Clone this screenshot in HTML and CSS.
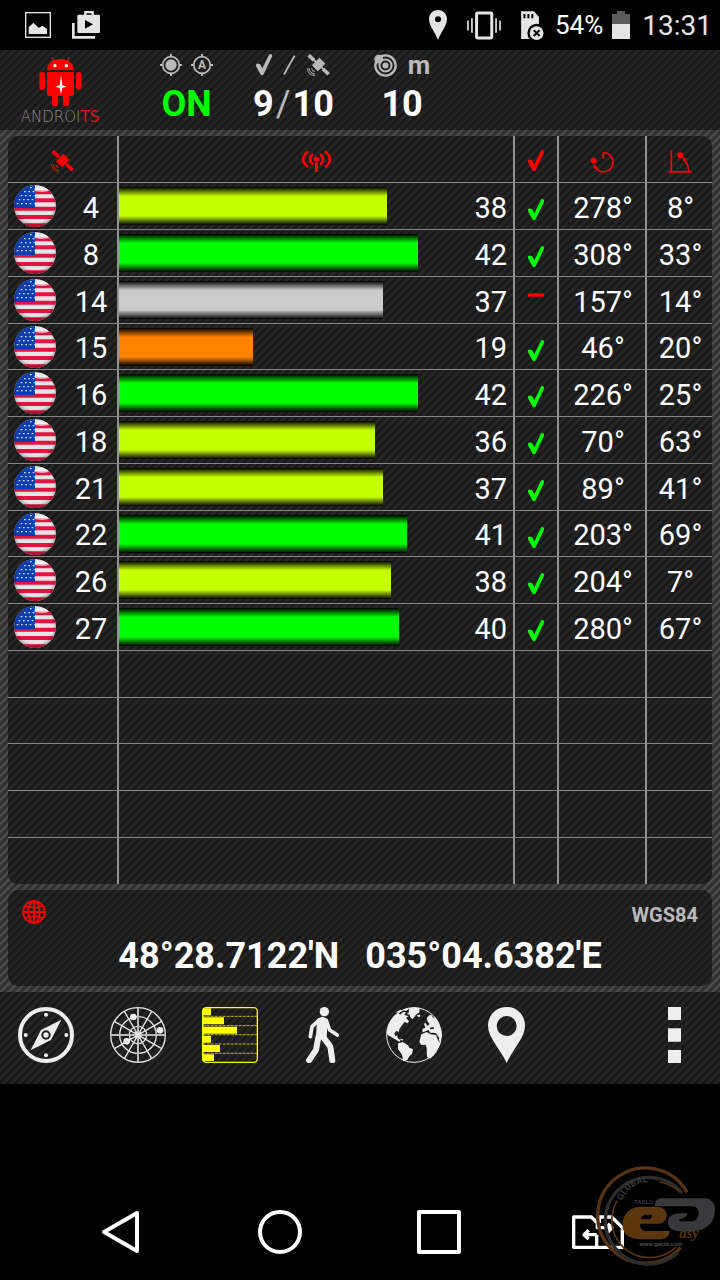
FILE: index.html
```html
<!DOCTYPE html>
<html lang="en">
<head>
  <meta charset="UTF-8">
  <meta name="viewport" content="width=device-width, initial-scale=1.0">
  <title>GPS Satellites</title>
  <link rel="stylesheet" href="styles.css">
</head>
<body>
  <!-- shared icons -->
  <svg class="sprite" aria-hidden="true">
    <defs>
      <clipPath id="flag-clip"><circle cx="63" cy="63" r="63"/></clipPath>
      <radialGradient id="flag-shade" cx="50%" cy="45%" r="55%">
        <stop offset="80%" stop-color="#000" stop-opacity="0"/>
        <stop offset="100%" stop-color="#000" stop-opacity="0.3"/>
      </radialGradient>
    </defs>
    <symbol id="flag" viewBox="0 0 126 126">
      <g clip-path="url(#flag-clip)">
        <rect width="126" height="126" fill="#e6e4e6"/>
        <path d="M0 22h126M0 46h126M0 71h126M0 96h126M0 121h126" stroke="#e0143c" stroke-width="12"/>
        <rect width="63" height="69" fill="#0a3cb4"/>
        <path d="M48 8h12M30 20h32M20 32h42M14 44h48M8 56h54" stroke="#dde6fa" stroke-width="4" stroke-dasharray="5 8"/>
        <ellipse cx="84" cy="14" rx="24" ry="7" fill="#fff" opacity="0.6"/>
        <rect width="126" height="126" fill="url(#flag-shade)"/>
      </g>
    </symbol>
    <symbol id="check" viewBox="0 0 48 66">
      <path d="M5 34L18 58L43 6" fill="none" stroke="currentColor" stroke-width="11" stroke-linecap="round" stroke-linejoin="round"/>
      <path d="M5 30L12 30L20 44L18 62Z" fill="currentColor"/>
    </symbol>
    <symbol id="minus" viewBox="0 0 48 66">
      <path d="M5 6H43" stroke="currentColor" stroke-width="11" stroke-linecap="round"/>
    </symbol>
    <symbol id="satellite" viewBox="0 0 70 66">
      <path d="M5 3L22 19M49 45L66 61" stroke="currentColor" stroke-width="11"/>
      <path d="M19 16L52 48" stroke="currentColor" stroke-width="5"/>
      <path d="M38 11L56 29L33 52L15 34Z" fill="currentColor"/>
      <path d="M14 43q1 9 10 10M7 43q1 16 17 17M2 43q0 21 22 22" fill="none" stroke="currentColor" stroke-width="3"/>
    </symbol>
  </svg>

  <div class="status-bar">
    <svg class="icon-photo" viewBox="75 36 78 78">
      <rect x="77" y="38" width="74" height="74" fill="none" stroke="#e4e4e4" stroke-width="4"/>
      <path d="M86 102V82L100 68L116 83L128 77L141 87V102Z" fill="#e4e4e4"/>
    </svg>
    <svg class="icon-28" viewBox="216 30 84 84">
      <path d="M220 66V109H285" fill="none" stroke="#e4e4e4" stroke-width="8"/>
      <path d="M256 42V33H278V42" fill="none" stroke="#e4e4e4" stroke-width="7" stroke-linejoin="round"/>
      <rect x="232" y="41" width="68" height="55" rx="4" fill="#e4e4e4"/>
      <path d="M255 57V83L279 70Z" fill="#000"/>
    </svg>
    <div class="status-right">
      <svg class="icon-place" viewBox="27 30 54 90">
        <path fill-rule="evenodd" d="M54 30C38 30 27 42 27 57C27 77 45 96 54 120C63 96 81 77 81 57C81 42 70 30 54 30ZM54 49a9 9 0 1 1 0 18a9 9 0 1 1 0-18Z" fill="#e4e4e4"/>
      </svg>
      <svg class="icon-vibrate" viewBox="140 32 103 86">
        <rect x="169" y="37" width="46" height="76" rx="3" fill="none" stroke="#e4e4e4" stroke-width="9"/>
        <path d="M143 60V90M155 53V97M228 53V97M240 60V90" stroke="#e4e4e4" stroke-width="5"/>
      </svg>
      <svg class="icon-sd" viewBox="302 32 69 88">
        <path d="M302 33H341L356 50V117H302Z" fill="#e4e4e4"/>
        <path d="M312 41V54M324 41V54M336 41V54" stroke="#000" stroke-width="6"/>
        <circle cx="349" cy="99" r="28" fill="#000"/>
        <circle cx="349" cy="99" r="21" fill="#e4e4e4"/>
        <path d="M340 90L358 108M358 90L340 108" stroke="#000" stroke-width="6"/>
      </svg>
      <span class="battery-level">54%</span>
      <svg class="icon-battery" viewBox="576 33 54 84">
        <path d="M576 42H591V33H615V42H630V72H576Z" fill="#5c5c5c"/>
        <rect x="576" y="72" width="54" height="45" fill="#e4e4e4"/>
      </svg>
      <span class="clock">13:31</span>
    </div>
  </div>

  <header class="summary stripes-dark">
    <div class="logo">
      <svg class="logo-droid" viewBox="108 165 141 156">
        <g fill="#ff0000">
          <path d="M138 210C138 166 219 166 219 210Z"/>
          <path d="M138 216H219V280Q219 288 211 288H146Q138 288 138 280Z"/>
          <rect x="115" y="216" width="17" height="54" rx="8"/>
          <rect x="225" y="216" width="17" height="54" rx="8"/>
          <rect x="153" y="276" width="18" height="43" rx="8"/>
          <rect x="186" y="276" width="18" height="43" rx="8"/>
        </g>
        <path d="M160 187L153 172M197 187L204 172" stroke="#d22" stroke-width="3"/>
        <circle cx="162" cy="197" r="5" fill="#fff"/>
        <circle cx="196" cy="197" r="5" fill="#fff"/>
        <path d="M180 226L184 256L197 260L184 264L180 283L176 264L163 260L176 256Z" fill="#fff"/>
      </svg>
      <span class="logo-name">ANDROI<b>TS</b></span>
    </div>
    <div class="stat">
      <div class="stat-icons">
        <svg class="icon-target" viewBox="0 0 66 66">
          <circle cx="33" cy="33" r="25" fill="none" stroke="#b9b9b9" stroke-width="5"/>
          <circle cx="33" cy="33" r="17" fill="#b9b9b9"/>
          <path d="M33 0V10M33 56V66M0 33H10M56 33H66" stroke="#b9b9b9" stroke-width="6"/>
        </svg>
        <svg class="icon-target" viewBox="0 0 66 66">
          <circle cx="33" cy="33" r="25" fill="none" stroke="#b9b9b9" stroke-width="5"/>
          <text class="target-letter" x="33" y="46" text-anchor="middle">A</text>
          <path d="M33 0V10M33 56V66M0 33H10M56 33H66" stroke="#b9b9b9" stroke-width="6"/>
        </svg>
      </div>
      <div class="stat-value on">ON</div>
    </div>
    <div class="stat">
      <div class="stat-icons fix">
        <svg class="icon-check"><use href="#check"/></svg>
        <svg class="icon-slash" viewBox="0 0 40 62"><path d="M3 60L36 2" stroke="#b9b9b9" stroke-width="6"/></svg>
        <svg class="icon-satellite"><use href="#satellite"/></svg>
      </div>
      <div class="stat-value">9<span class="slash">/</span>10</div>
    </div>
    <div class="stat">
      <div class="stat-icons fix">
        <svg class="icon-accuracy" viewBox="0 0 68 68">
          <circle cx="34" cy="34" r="30" fill="none" stroke="#b9b9b9" stroke-width="7"/>
          <circle cx="34" cy="34" r="18" fill="none" stroke="#b9b9b9" stroke-width="6"/>
          <circle cx="34" cy="34" r="9" fill="#b9b9b9"/>
          <circle cx="14" cy="15" r="13" fill="#b9b9b9"/>
        </svg>
        <span class="unit">m</span>
      </div>
      <div class="stat-value">10</div>
    </div>
  </header>

  <main class="content">
    <section class="panel stripes-dark">
      <table class="sat-table">
        <thead>
          <tr>
            <th class="col-id" aria-label="Satellite"><svg class="icon-satellite"><use href="#satellite"/></svg></th>
            <th class="col-signal" aria-label="Signal">
              <svg class="icon-signal" viewBox="0 0 92 70" fill="none" stroke="currentColor" stroke-linecap="round">
                <path d="M46 42V63" stroke-width="9"/>
                <circle cx="46" cy="28" r="8" fill="currentColor" stroke="none"/>
                <path d="M33 14q-14 14 0 28M59 14q14 14 0 28M18 6q-26 22 0 44M74 6q26 22 0 44" stroke-width="8"/>
              </svg>
            </th>
            <th class="col-used" aria-label="Used in fix"><svg class="icon-check"><use href="#check"/></svg></th>
            <th class="col-azimuth" aria-label="Azimuth">
              <svg class="icon-angle" viewBox="0 0 72 68" fill="none" stroke="currentColor" stroke-width="5">
                <path d="M40 26V7A29 29 0 1 1 13 46"/>
                <circle cx="11" cy="32" r="9" fill="currentColor" stroke="none"/>
                <path d="M11 42L24 52L11 56Z" fill="currentColor" stroke="none"/>
              </svg>
            </th>
            <th class="col-elevation" aria-label="Elevation">
              <svg class="icon-angle" viewBox="0 0 72 68" fill="none" stroke="currentColor" stroke-width="5">
                <path d="M10 0V65M1 65H71M46 24Q60 40 63 64"/>
                <circle cx="37" cy="15" r="9" fill="currentColor" stroke="none"/>
                <path d="M43 20L58 27L46 34Z" fill="currentColor" stroke="none"/>
              </svg>
            </th>
          </tr>
        </thead>
        <tbody>
          <tr>
            <td><div class="sat"><svg class="flag"><use href="#flag"/></svg><span>4</span></div></td>
            <td><div class="signal"><div class="bar fair" style="width: 68%"></div><span>38</span></div></td>
            <td><svg class="used yes"><use href="#check"/></svg></td>
            <td class="angle">278°</td>
            <td class="angle">8°</td>
          </tr>
          <tr>
            <td><div class="sat"><svg class="flag"><use href="#flag"/></svg><span>8</span></div></td>
            <td><div class="signal"><div class="bar good" style="width: 76%"></div><span>42</span></div></td>
            <td><svg class="used yes"><use href="#check"/></svg></td>
            <td class="angle">308°</td>
            <td class="angle">33°</td>
          </tr>
          <tr>
            <td><div class="sat"><svg class="flag"><use href="#flag"/></svg><span>14</span></div></td>
            <td><div class="signal"><div class="bar unused" style="width: 67%"></div><span>37</span></div></td>
            <td><svg class="used no"><use href="#minus"/></svg></td>
            <td class="angle">157°</td>
            <td class="angle">14°</td>
          </tr>
          <tr>
            <td><div class="sat"><svg class="flag"><use href="#flag"/></svg><span>15</span></div></td>
            <td><div class="signal"><div class="bar weak" style="width: 34%"></div><span>19</span></div></td>
            <td><svg class="used yes"><use href="#check"/></svg></td>
            <td class="angle">46°</td>
            <td class="angle">20°</td>
          </tr>
          <tr>
            <td><div class="sat"><svg class="flag"><use href="#flag"/></svg><span>16</span></div></td>
            <td><div class="signal"><div class="bar good" style="width: 76%"></div><span>42</span></div></td>
            <td><svg class="used yes"><use href="#check"/></svg></td>
            <td class="angle">226°</td>
            <td class="angle">25°</td>
          </tr>
          <tr>
            <td><div class="sat"><svg class="flag"><use href="#flag"/></svg><span>18</span></div></td>
            <td><div class="signal"><div class="bar fair" style="width: 65%"></div><span>36</span></div></td>
            <td><svg class="used yes"><use href="#check"/></svg></td>
            <td class="angle">70°</td>
            <td class="angle">63°</td>
          </tr>
          <tr>
            <td><div class="sat"><svg class="flag"><use href="#flag"/></svg><span>21</span></div></td>
            <td><div class="signal"><div class="bar fair" style="width: 67%"></div><span>37</span></div></td>
            <td><svg class="used yes"><use href="#check"/></svg></td>
            <td class="angle">89°</td>
            <td class="angle">41°</td>
          </tr>
          <tr>
            <td><div class="sat"><svg class="flag"><use href="#flag"/></svg><span>22</span></div></td>
            <td><div class="signal"><div class="bar good" style="width: 73%"></div><span>41</span></div></td>
            <td><svg class="used yes"><use href="#check"/></svg></td>
            <td class="angle">203°</td>
            <td class="angle">69°</td>
          </tr>
          <tr>
            <td><div class="sat"><svg class="flag"><use href="#flag"/></svg><span>26</span></div></td>
            <td><div class="signal"><div class="bar fair" style="width: 69%"></div><span>38</span></div></td>
            <td><svg class="used yes"><use href="#check"/></svg></td>
            <td class="angle">204°</td>
            <td class="angle">7°</td>
          </tr>
          <tr>
            <td><div class="sat"><svg class="flag"><use href="#flag"/></svg><span>27</span></div></td>
            <td><div class="signal"><div class="bar good" style="width: 71%"></div><span>40</span></div></td>
            <td><svg class="used yes"><use href="#check"/></svg></td>
            <td class="angle">280°</td>
            <td class="angle">67°</td>
          </tr>
          <tr><td></td><td></td><td></td><td></td><td></td></tr>
          <tr><td></td><td></td><td></td><td></td><td></td></tr>
          <tr><td></td><td></td><td></td><td></td><td></td></tr>
          <tr><td></td><td></td><td></td><td></td><td></td></tr>
          <tr><td></td><td></td><td></td><td></td><td></td></tr>
        </tbody>
      </table>
    </section>

    <section class="panel position stripes-dark">
      <div class="position-top">
        <svg class="icon-globe" viewBox="0 0 68 68" fill="none" stroke="#ff0000" stroke-width="5">
          <circle cx="34" cy="34" r="31"/>
          <ellipse cx="34" cy="34" rx="16" ry="31"/>
          <path d="M34 3V65M3 34H65M9 17Q34 26 59 17M9 51Q34 42 59 51"/>
        </svg>
        <span class="datum">WGS84</span>
      </div>
      <div class="coordinates"><span>48°28.7122'N</span><span>035°04.6382'E</span></div>
    </section>
  </main>

  <nav class="toolbar stripes-dark">
    <button type="button" aria-label="Compass">
      <svg viewBox="54 381 168 168">
        <circle cx="138" cy="465" r="78" fill="none" stroke="#eee" stroke-width="12"/>
        <path d="M184 419L153 480L92 511L123 450Z" fill="#eee"/>
        <circle cx="138" cy="465" r="14" fill="#1e1e1e"/>
        <circle cx="138" cy="465" r="8" fill="#eee"/>
        <g fill="#eee"><circle cx="138" cy="404" r="6"/><circle cx="138" cy="526" r="6"/><circle cx="77" cy="465" r="6"/><circle cx="199" cy="465" r="6"/></g>
      </svg>
    </button>
    <button type="button" aria-label="Sky view">
      <svg viewBox="-84 -84 168 168" fill="none" stroke="#e6e6e6" stroke-width="4">
        <circle r="82"/>
        <circle r="55"/>
        <circle r="26"/>
        <circle r="9" fill="#e6e6e6"/>
        <path d="M-82 0H82M0 -82V82" stroke="#bbb" stroke-width="6"/>
        <path d="M-71 -41L71 41M-71 41L71 -41M-41 -71L41 71M-41 71L41 -71"/>
        <g fill="#eee" stroke="none"><circle cx="-14" cy="-54" r="10"/><circle cx="66" cy="-14" r="10"/><circle cx="-34" cy="19" r="10"/></g>
      </svg>
    </button>
    <button type="button" aria-label="Satellite list">
      <svg viewBox="606 381 168 168">
        <path d="M608 409H772M608 437H772M608 464H772M608 492H772M608 520H772" stroke="#c0be00" stroke-width="3" stroke-dasharray="9 3"/>
        <rect x="608" y="383" width="164" height="164" rx="11" fill="none" stroke="#ff0" stroke-width="4"/>
        <path d="M608 385H633V406H608ZM608 412H672V433H608ZM608 440H711V461H608ZM608 467H633V488H608ZM608 495H660V516H608ZM608 523H642V543H608Z" fill="#ff0"/>
      </svg>
    </button>
    <button type="button" aria-label="Track">
      <svg viewBox="42 381 168 168" fill="none" stroke="#eee" stroke-linecap="round" stroke-linejoin="round">
        <circle cx="133" cy="395" r="14" fill="#eee" stroke="none"/>
        <path d="M115 420L127 414L139 420L136 472L112 472Z" fill="#eee" stroke-width="8"/>
        <path d="M117 420L96 440L91 470M139 422L149 450L172 465" stroke-width="11"/>
        <path d="M115 472L108 510L87 541M130 472L151 500L157 541" stroke-width="18"/>
      </svg>
    </button>
    <button type="button" aria-label="Map">
      <svg viewBox="318 381 168 168" fill="#eee">
        <circle cx="402" cy="465" r="82" fill="none" stroke="#eee" stroke-width="3"/>
        <path d="M320 456L326 432L340 410L350 402L356 398L360 404L370 396L378 396L373 405L386 409L378 413L387 424L382 430L374 426L364 439L358 447L356 457L350 452L343 460L346 469L352 466L353 474L362 482L358 485L345 478L332 470L322 464Z"/>
        <path d="M347 397L360 390L368 391L358 398ZM367 389L382 384L388 386L378 393ZM383 397L389 401L383 405Z"/>
        <path d="M388 384L402 382L419 384L418 397L407 405L398 418L391 412L386 396ZM411 405L421 404L420 410L414 411Z"/>
        <path d="M354 490L368 486L384 496L388 503L399 508L396 522L388 529L382 540L370 544L366 524L354 507Z"/>
        <path d="M424 463L440 456L452 463L468 465L474 480L481 490L474 506L462 526L450 536L441 531L440 505L437 494L424 495L418 485Z"/>
        <path d="M427 447L436 443L432 431L437 428L442 438L449 432L443 425L440 414L448 405L455 406L459 413L466 412L476 428L484 452L486 472L478 474L468 460L458 458L452 459L445 450L437 454L428 457Z"/>
        <path d="M478 466L484 461L482 490L477 480ZM357 476L370 478L368 482ZM466 516L470 512L468 522Z"/>
        <path d="M449 443L461 441L462 446L452 448Z" fill="#1e1e1e"/>
      </svg>
    </button>
    <button type="button" aria-label="Waypoints">
      <svg viewBox="594 381 168 168">
        <path fill-rule="evenodd" d="M680 381C647 381 624 407 624 437C624 473 661 506 680 549C699 506 735 473 735 437C735 407 713 381 680 381ZM680 408a30 30 0 1 1 0 60a30 30 0 1 1 0-60Z" fill="#eee"/>
      </svg>
    </button>
    <button type="button" class="more" aria-label="More options">
      <svg viewBox="1098 381 168 168">
        <path d="M1164 381H1203V420H1164ZM1164 445H1203V485H1164ZM1164 510H1203V549H1164Z" fill="#eee"/>
      </svg>
    </button>
  </nav>

  <nav class="system-nav">
    <button type="button" aria-label="Back">
      <svg viewBox="0 0 44 44"><path d="M38 3V41L5 22Z"/></svg>
    </button>
    <button type="button" aria-label="Home">
      <svg viewBox="0 0 44 44"><circle cx="22" cy="22" r="20"/></svg>
    </button>
    <button type="button" aria-label="Recent apps">
      <svg viewBox="0 0 44 44"><rect x="2" y="2" width="40" height="40"/></svg>
    </button>
    <button type="button" aria-label="Switch app">
      <svg class="icon-switch" viewBox="0 0 156 102">
        <path d="M74 59V97H5V6H58L76 24V38H117M74 97H151V38L119 6H82V24M107 26L120 38L107 52M74 59H36M50 46L36 59L50 72"/>
      </svg>
    </button>
  </nav>

  <svg class="watermark" viewBox="0 0 480 390" aria-hidden="true">
    <defs><path id="watermark-arc" d="M186 152A88 88 0 0 1 318 112"/></defs>
    <g fill="none">
      <path d="M381 127A143 143 0 1 0 362 293" stroke="#5a3212" stroke-width="10"/>
      <path d="M366 129A130 130 0 1 0 352 310" stroke="#2c2c2c" stroke-width="10"/>
      <path d="M360 126A120 120 0 0 0 298 96M172 152A112 112 0 0 0 255 322A120 120 0 0 0 348 292" stroke="#5a3212" stroke-width="5"/>
    </g>
    <path fill-rule="evenodd" d="M300 145H432Q465 147 465 180Q463 240 395 244H360Q324 242 324 215Q326 190 362 190H382Q378 206 358 208V214H398Q416 208 416 188Q414 170 396 169H284Q286 148 300 145Z" fill="#39393c"/>
    <path fill-rule="evenodd" d="M240 170H292Q320 172 320 196Q318 221 296 221H240Q240 240 256 243H330Q326 266 306 268H236Q188 264 187 222Q192 174 240 170ZM254 194Q244 198 242 208H270Q278 202 276 194Z" fill="#5c370e"/>
    <text class="mark-arc"><textPath href="#watermark-arc">GLOBAL</textPath></text>
    <text class="mark-small" x="222" y="162">TAGLO</text>
    <text class="mark-easy" x="358" y="264">asy</text>
    <text class="mark-url" x="238" y="288">www.gecid.com</text>
  </svg>
</body>
</html>
```
FILE: styles.css
```css
* {
  margin: 0;
  padding: 0;
  box-sizing: border-box;
}

body {
  position: relative;
  display: flex;
  flex-direction: column;
  min-height: 100vh;
  background-color: #000;
  color: #fff;
  font-family: Roboto, sans-serif;
}

svg {
  display: block;
}

button {
  border: none;
  background: none;
  color: inherit;
  cursor: pointer;
}

.sprite {
  position: absolute;
  width: 0;
  height: 0;
}

.stripes-dark {
  background-color: #1a1a1a;
  background-image: linear-gradient(135deg, #191919 25%, #252525 25%, #252525 50%, #191919 50%, #191919 75%, #252525 75%);
  background-size: 8px 8px;
}

/* status bar */
.status-bar {
  display: flex;
  align-items: center;
  gap: 21px;
  height: 50px;
  padding: 0 8px 0 25px;
}

.status-right {
  display: flex;
  align-items: center;
  margin-left: auto;
}

.icon-photo {
  width: 26px;
  height: 26px;
}

.icon-28 {
  width: 28px;
  height: 28px;
}

.icon-place {
  width: 18px;
  height: 30px;
}

.icon-vibrate {
  width: 34px;
  height: 29px;
  margin: 0 20px;
}

.icon-sd {
  width: 23px;
  height: 29px;
}

.icon-battery {
  width: 18px;
  height: 28px;
}

.battery-level {
  margin: 0 9px 0 11px;
  font-size: 26px;
}

.clock {
  margin-left: 12px;
  font-size: 28px;
  line-height: 36px;
  padding-top: 2px;
  color: #e4e4e4;
}

/* summary */
.summary {
  display: flex;
  gap: 40px;
  height: 80px;
  padding: 3px 20px;
}

.logo {
  display: flex;
  flex-direction: column;
  align-items: center;
  gap: 2px;
  width: 80px;
  margin-right: 20px;
  padding-top: 2px;
}

.logo-droid {
  width: 47px;
  height: 52px;
}

.logo-name {
  font-family: "DejaVu Sans", sans-serif;
  font-size: 15px;
  font-weight: 200;
  line-height: 16px;
  color: #8a8a8a;
}

.logo-name b {
  font-weight: normal;
  color: #e01010;
}

.stat {
  display: flex;
  flex-direction: column;
  align-items: center;
  gap: 7px;
}

.stat-icons {
  display: flex;
  align-items: center;
  gap: 9px;
  height: 24px;
  color: #b9b9b9;
}

.fix {
  gap: 11px;
}

.stat-value {
  font-size: 36px;
  font-weight: bold;
  line-height: 40px;
}

.on {
  color: #00ff00;
}

.slash {
  margin: 0 2px;
  font-weight: normal;
  color: #b9b9b9;
}

.unit {
  font-size: 26px;
  font-weight: bold;
}

.icon-target {
  width: 22px;
  height: 22px;
}

.target-letter {
  font-size: 36px;
  font-weight: bold;
  fill: #b9b9b9;
}

.icon-check {
  width: 16px;
  height: 22px;
}

.icon-slash {
  width: 13px;
  height: 20px;
}

.icon-satellite {
  width: 23px;
  height: 22px;
}

.icon-accuracy {
  width: 23px;
  height: 23px;
}

/* panels */
.content {
  display: flex;
  flex-direction: column;
  gap: 6px;
  padding: 6px 8px;
  background-color: #3a3a3a;
  background-image: linear-gradient(135deg, #303030 25%, #484848 25%, #484848 50%, #303030 50%, #303030 75%, #484848 75%);
  background-size: 8px 8px;
}

.panel {
  border-radius: 10px;
  overflow: hidden;
}

.sat-table {
  width: 100%;
  table-layout: fixed;
  border-collapse: separate;
  border-spacing: 0;
  font-size: 29px;
  line-height: 34px;
  text-align: center;
}

.sat-table th {
  height: 46px;
  color: #ff0000;
}

.sat-table td {
  height: 47px;
  border-top: 1px solid #858585;
}

.sat-table tr:nth-child(4n) td {
  height: 46px;
}

.sat-table th + th,
.sat-table td + td {
  border-left: 2px solid #929292;
}

.sat-table th svg {
  margin: 4px auto 0;
}

.sat-table .angle {
  padding: 3px 0 0 2px;
}

.col-id {
  width: 109px;
}

.col-used {
  width: 44px;
}

.col-azimuth {
  width: 88px;
}

.col-elevation {
  width: 67px;
}

.icon-signal {
  width: 31px;
  height: 23px;
}

.icon-angle {
  width: 24px;
  height: 23px;
}

.sat {
  display: flex;
  align-items: center;
  padding-left: 6px;
}

.sat span {
  flex: 1;
  padding: 3px 0 0 9px;
}

.flag {
  width: 42px;
  height: 42px;
}

.signal {
  display: flex;
  align-items: center;
  justify-content: space-between;
}

.signal span {
  padding: 3px 6px 0 0;
}

.bar {
  height: 38px;
  background-image: linear-gradient(#000, transparent 24%, transparent 76%, #000);
}

.good {
  background-color: #00ff00;
}

.fair {
  background-color: #c3ff00;
}

.weak {
  background-color: #ff8400;
}

.unused {
  background-color: #cccccc;
}

.used {
  width: 16px;
  height: 22px;
  margin: 8px auto 0;
}

.yes {
  color: #00ff00;
}

.no {
  color: #ff0000;
}

/* position */
.position {
  height: 96px;
  padding: 10px 14px;
}

.position-top {
  display: flex;
  justify-content: space-between;
  align-items: flex-start;
}

.icon-globe {
  width: 24px;
  height: 24px;
}

.datum {
  font-size: 20px;
  font-weight: bold;
  line-height: 30px;
  color: #b9b9b9;
}

.coordinates {
  display: flex;
  justify-content: center;
  gap: 26px;
  font-size: 36px;
  font-weight: bold;
  line-height: 52px;
}

/* toolbar */
.toolbar {
  display: flex;
  align-items: center;
  gap: 36px;
  height: 92px;
  padding: 0 18px 6px;
}

.toolbar svg {
  width: 56px;
  height: 56px;
}

.more {
  margin-left: auto;
}

/* system navigation */
.system-nav {
  display: grid;
  grid-template-columns: repeat(4, 1fr);
  align-items: center;
  justify-items: center;
  height: 96px;
  margin-top: auto;
  padding: 0 43px 0 41px;
}

.system-nav svg {
  width: 44px;
  height: 44px;
  fill: none;
  stroke: #fff;
  stroke-width: 4;
  stroke-linejoin: round;
}

.system-nav .icon-switch {
  width: 52px;
  height: 34px;
  stroke-width: 10;
}

.watermark {
  position: absolute;
  right: 0;
  bottom: 0;
  width: 160px;
  height: 130px;
  pointer-events: none;
}

.mark-arc {
  font-size: 27px;
  font-weight: bold;
  fill: #3a3a3a;
}

.mark-small {
  font-size: 18px;
  font-weight: bold;
  fill: #343448;
}

.mark-easy {
  font-family: "Liberation Serif", serif;
  font-size: 44px;
  font-style: italic;
  font-weight: bold;
  fill: #5c370e;
}

.mark-url {
  font-size: 18px;
  font-weight: bold;
  fill: #4a4a4a;
}
```
